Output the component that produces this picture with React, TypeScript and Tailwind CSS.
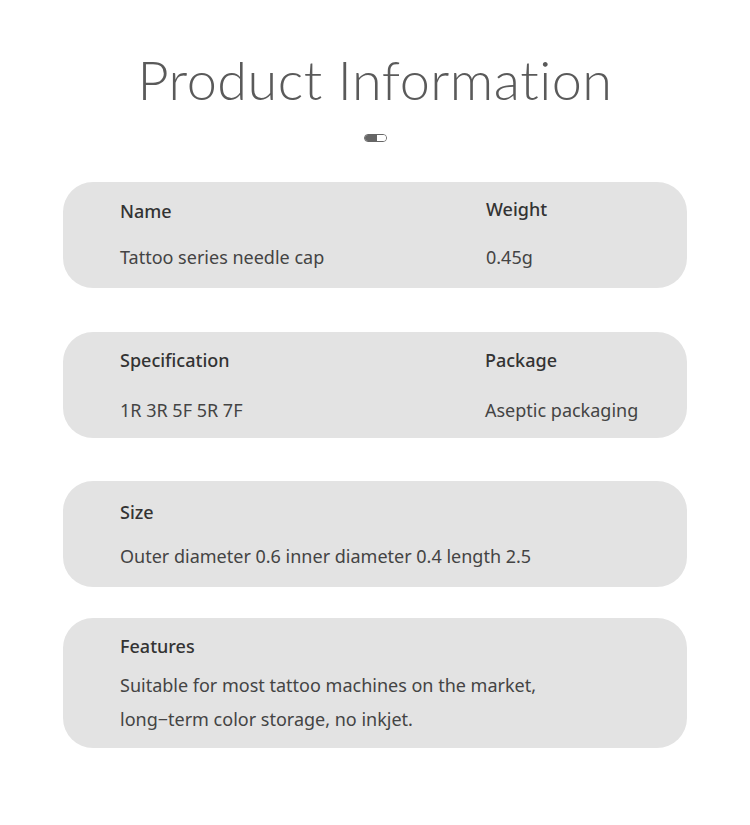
const font = { fontFamily: '"Noto Sans", "Liberation Sans", sans-serif' };

function Toggle() {
	return (
		<div className="flex h-[8px] w-[23px] overflow-hidden rounded-full border border-[#666]">
			<div className="w-[12px] bg-[#666]" />
			<div className="flex-1 bg-white" />
		</div>
	);
}

function Cell({ label, value, gap }: { label: string; value: string; gap: string }) {
	return (
		<div className="flex flex-col">
			<div className="text-[18px] font-medium leading-[24px] text-[#333]">{label}</div>
			<div className={`${gap} text-[18px] leading-[24px] text-[#444]`}>{value}</div>
		</div>
	);
}

export default function App() {
	return (
		<div className="flex min-h-[825px] w-[750px] flex-col items-center bg-white" style={font}>
			<h1
				className="mt-[48px] text-[54px] font-light leading-[64px] tracking-[0.5px] text-[#5a5a5a]"
				style={{ fontFamily: 'Lato, "Noto Sans", sans-serif' }}
			>
				Product Information
			</h1>
			<div className="mt-[22px]">
				<Toggle />
			</div>

			<div className="mt-[40px] flex w-[624px] flex-col">
				<div className="grid h-[106px] grid-cols-[366px_1fr] rounded-[30px] bg-[#e3e3e3] pl-[57px] pt-[17px]">
					<Cell label="Name" value="Tattoo series needle cap" gap="mt-[22px]" />
					<div className="-mt-[2px]">
						<Cell label="Weight" value="0.45g" gap="mt-[24px]" />
					</div>
				</div>

				<div className="mt-[44px] grid h-[106px] grid-cols-[365px_1fr] rounded-[30px] bg-[#e3e3e3] pl-[57px] pt-[16px]">
					<Cell label="Specification" value="1R 3R 5F 5R 7F" gap="mt-[26px]" />
					<Cell label="Package" value="Aseptic packaging" gap="mt-[26px]" />
				</div>

				<div className="mt-[43px] flex h-[106px] flex-col rounded-[30px] bg-[#e3e3e3] pl-[57px] pt-[19px]">
					<div className="text-[18px] font-medium leading-[24px] text-[#333]">Size</div>
					<div className="mt-[20px] text-[18px] leading-[24px] text-[#444]">
						Outer diameter 0.6 inner diameter 0.4 length 2.5
					</div>
				</div>

				<div className="mt-[31px] flex h-[130px] flex-col rounded-[30px] bg-[#e3e3e3] pl-[57px] pt-[16px]">
					<div className="text-[18px] font-medium leading-[24px] text-[#333]">Features</div>
					<div className="mt-[10px] text-[18px] leading-[34px] text-[#444]">
						Suitable for most tattoo machines on the market,
						<br />
						long−term color storage, no inkjet.
					</div>
				</div>
			</div>
		</div>
	);
}
